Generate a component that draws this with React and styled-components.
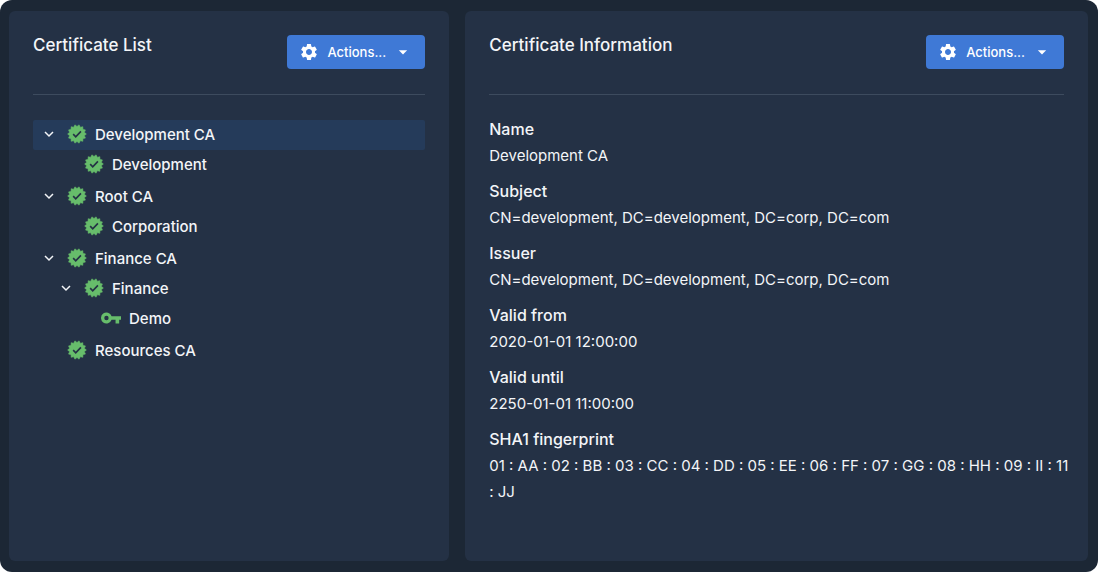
import React from 'react';
import styled, { createGlobalStyle, ThemeProvider } from 'styled-components';
import { MdSettings, MdArrowDropDown } from 'react-icons/md';

const theme = {
	colours: {
		page: '#ffffff',
		frame: '#1c2735',
		panel: '#243145',
		selected: '#253b5a',
		divider: '#3d4b5e',
		blue: '#3f79d6',
		green: '#67bd6b',
		text: '#f3f5f8',
	},
};

const GlobalStyle = createGlobalStyle`
	* {
		box-sizing: border-box;
	}

	body {
		margin: 0;
		background: ${theme.colours.page};
		color: ${theme.colours.text};
		font-family: Inter, "Liberation Sans", sans-serif;
		font-size: 15px;
	}
`;

const Page = styled.main`
	min-height: 100vh;
	padding: 11px 10px 11px 9px;
	border-radius: 12px;
	background: ${({ theme }) => theme.colours.frame};

	display: grid;
	grid-template-columns: repeat(12, minmax(0, 1fr));
	gap: 16px;
`;

const Panel = styled.section`
	grid-column: span ${({ $span }) => $span};
	padding: 24px;
	border-radius: 6px;
	background: ${({ theme }) => theme.colours.panel};
`;

const PanelHeader = styled.header`
	display: flex;
	justify-content: space-between;
	align-items: flex-start;

	padding-bottom: 25px;
	margin-bottom: 25px;
	border-bottom: 1px solid ${({ theme }) => theme.colours.divider};
`;

const Title = styled.h2`
	margin: 0;
	font-size: 17px;
	line-height: 21px;
	font-weight: 500;
`;

const ActionsButton = styled.button`
	display: flex;
	align-items: center;

	height: 34px;
	padding: 0 12px;
	border: 0;
	border-radius: 4px;
	background: ${({ theme }) => theme.colours.blue};
	color: #ffffff;
	font: 500 13px/20px Inter, "Liberation Sans", sans-serif;
	cursor: pointer;

	span {
		margin: 0 7px 0 8px;
	}
`;

const TreeList = styled.ul`
	list-style: none;
	margin: 0;
	padding: 0;
`;

const TreeItem = styled.li`
	margin-bottom: ${({ $depth }) => ($depth === 0 ? '2px' : '0')};
`;

const TreeRow = styled.div`
	display: flex;
	align-items: center;

	height: 30px;
	padding-bottom: 2px;
	padding-left: ${({ $depth }) => 8 + $depth * 17}px;
	border-radius: 2px;
	background: ${({ theme, $selected }) => ($selected ? theme.colours.selected : 'transparent')};
	font-weight: 500;

	.type-icon {
		flex: none;
		margin: 0 8px 0 10px;
		color: ${({ theme }) => theme.colours.green};
	}
`;

const Toggle = styled.button`
	display: flex;
	width: 16px;
	height: 16px;
	padding: 0;
	border: 0;
	background: none;
	color: inherit;
	cursor: pointer;
`;

const ToggleSpace = styled.span`
	width: 16px;
`;

const Details = styled.dl`
	margin: 0;

	dt {
		margin-bottom: 5px;
		font-size: 16px;
		line-height: 18px;
		font-weight: 500;
	}

	/* long fingerprints may run a little into the panel padding */
	dd {
		margin: 0 -12px 13px 0;
		line-height: 26px;
	}
`;

const certificates = [
	{ name: 'Development CA', selected: true, children: [{ name: 'Development' }] },
	{ name: 'Root CA', children: [{ name: 'Corporation' }] },
	{
		name: 'Finance CA',
		children: [{ name: 'Finance', children: [{ name: 'Demo', type: 'key' }] }],
	},
	{ name: 'Resources CA' },
];

const details = [
	['Name', 'Development CA'],
	['Subject', 'CN=development, DC=development, DC=corp, DC=com'],
	['Issuer', 'CN=development, DC=development, DC=corp, DC=com'],
	['Valid from', '2020-01-01 12:00:00'],
	['Valid until', '2250-01-01 11:00:00'],
	[
		'SHA1 fingerprint',
		'01 : AA : 02 : BB : 03 : CC : 04 : DD : 05 : EE : 06 : FF : 07 : GG : 08 : HH : 09 : II : 11 : JJ',
	],
];

// pointed seal, outer and inner corners alternate
const sealPoints = Array.from({ length: 28 }, (_, i) => {
	const radius = i % 2 ? 9.1 : 11.3;
	const angle = (i * Math.PI) / 14;
	return `${(12 + radius * Math.cos(angle)).toFixed(2)},${(12 + radius * Math.sin(angle)).toFixed(2)}`;
}).join(' ');

const SealIcon = ({ className }) => (
	<svg className={className} width="20" height="20" viewBox="0 0 24 24" aria-hidden="true">
		<polygon points={sealPoints} fill="currentColor" stroke="currentColor" strokeWidth="0.6" strokeLinejoin="round" />
		<path d="M7.4 12.2l3.1 3.1 6.2-6.4" fill="none" stroke={theme.colours.panel} strokeWidth="2" />
	</svg>
);

const KeyIcon = ({ className }) => (
	<svg className={className} width="20" height="20" viewBox="1 1 22 22" fill="currentColor" aria-hidden="true">
		<path
			fillRule="evenodd"
			d="M12.65 10A6 6 0 1 0 12.65 14H17v4h4v-4h2v-4zM7 14.4a2.4 2.4 0 1 1 0-4.8 2.4 2.4 0 0 1 0 4.8z"
		/>
	</svg>
);

const ChevronIcon = () => (
	<svg width="16" height="16" viewBox="0 0 16 16" fill="none" stroke="currentColor" strokeWidth="1.5" aria-hidden="true">
		<path d="M4 6l4 4 4-4" />
	</svg>
);

const Actions = () => (
	<ActionsButton type="button" aria-haspopup="menu">
		<MdSettings size={20} aria-hidden="true" />
		<span>Actions...</span>
		<MdArrowDropDown size={20} aria-hidden="true" />
	</ActionsButton>
);

const Certificate = ({ item, depth }) => (
	<TreeItem $depth={depth}>
		<TreeRow $depth={depth} $selected={item.selected}>
			{item.children ? (
				<Toggle type="button" aria-expanded="true" aria-label={`Collapse ${item.name}`}>
					<ChevronIcon />
				</Toggle>
			) : (
				<ToggleSpace />
			)}
			{item.type === 'key' ? <KeyIcon className="type-icon" /> : <SealIcon className="type-icon" />}
			{item.name}
		</TreeRow>
		{item.children && (
			<TreeList>
				{item.children.map((child) => (
					<Certificate key={child.name} item={child} depth={depth + 1} />
				))}
			</TreeList>
		)}
	</TreeItem>
);

const App = () => {
	return (
		<ThemeProvider theme={theme}>
			<GlobalStyle />
			<Page>
				<Panel $span={5}>
					<PanelHeader>
						<Title>Certificate List</Title>
						<Actions />
					</PanelHeader>
					<TreeList>
						{certificates.map((item) => (
							<Certificate key={item.name} item={item} depth={0} />
						))}
					</TreeList>
				</Panel>
				<Panel $span={7}>
					<PanelHeader>
						<Title>Certificate Information</Title>
						<Actions />
					</PanelHeader>
					<Details>
						{details.map(([label, value]) => (
							<React.Fragment key={label}>
								<dt>{label}</dt>
								<dd>{value}</dd>
							</React.Fragment>
						))}
					</Details>
				</Panel>
			</Page>
		</ThemeProvider>
	);
};

export default App;
